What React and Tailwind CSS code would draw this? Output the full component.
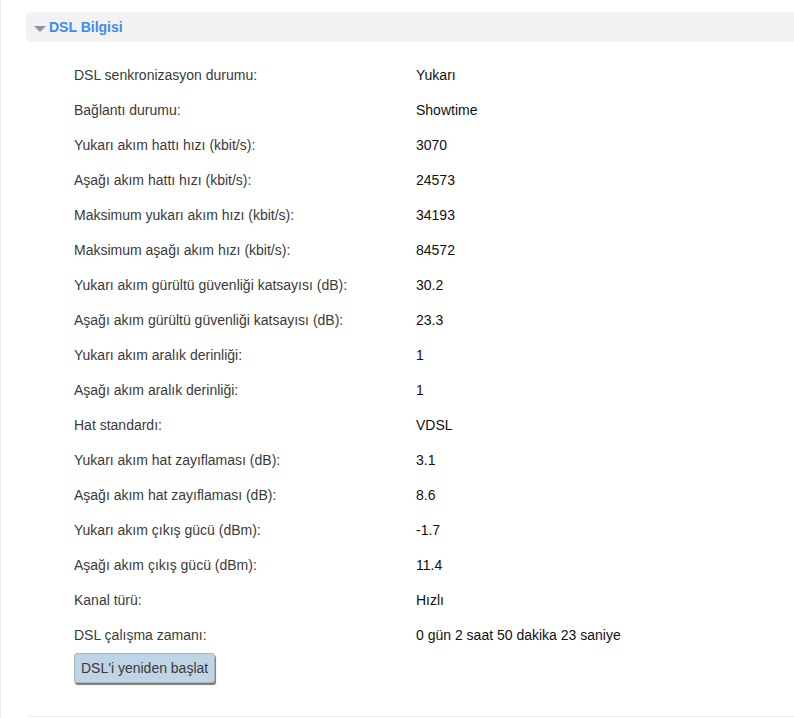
const rows = [
  ["DSL senkronizasyon durumu:", "Yukarı"],
  ["Bağlantı durumu:", "Showtime"],
  ["Yukarı akım hattı hızı (kbit/s):", "3070"],
  ["Aşağı akım hattı hızı (kbit/s):", "24573"],
  ["Maksimum yukarı akım hızı (kbit/s):", "34193"],
  ["Maksimum aşağı akım hızı (kbit/s):", "84572"],
  ["Yukarı akım gürültü güvenliği katsayısı (dB):", "30.2"],
  ["Aşağı akım gürültü güvenliği katsayısı (dB):", "23.3"],
  ["Yukarı akım aralık derinliği:", "1"],
  ["Aşağı akım aralık derinliği:", "1"],
  ["Hat standardı:", "VDSL"],
  ["Yukarı akım hat zayıflaması (dB):", "3.1"],
  ["Aşağı akım hat zayıflaması (dB):", "8.6"],
  ["Yukarı akım çıkış gücü (dBm):", "-1.7"],
  ["Aşağı akım çıkış gücü (dBm):", "11.4"],
  ["Kanal türü:", "Hızlı"],
  ["DSL çalışma zamanı:", "0 gün 2 saat 50 dakika 23 saniye"],
];

export default function App() {
  return (
    <div className="w-[794px] h-[718px] overflow-hidden bg-white border-l border-[#ededed] text-[14px]" style={{ fontFamily: '"Liberation Sans", Arial, sans-serif' }}>
      <div className="pl-[25px] pt-3">
        <div className="h-[30px] bg-[#f2f2f2] rounded-l-[5px] flex items-center pl-2">
          <svg width="12" height="6" viewBox="0 0 12 6" className="mt-[3px]">
            <polygon points="0,0 12,0 6,6" fill="#8e9aa3" />
          </svg>
          <span className="ml-[3px] font-bold text-[14px] text-[#3d8af5]">DSL Bilgisi</span>
        </div>
        <div className="pl-[48px] pt-[16px]">
          {rows.map(([label, value]) => (
            <div key={label} className="h-[35px] flex items-center">
              <div className="w-[342px] text-[#3a3a3a]">{label}</div>
              <div className="text-[#111]">{value}</div>
            </div>
          ))}
          <button className="h-[30px] px-[6px] bg-[#bfd4e5] text-[#3a3a3a] text-[14px] rounded-[3px] border border-[#a9b4bc] shadow-[1px_2px_1px_#7a7a7a]">
            DSL'i yeniden başlat
          </button>
        </div>
        <div className="mt-[33px] ml-[2px] border-t border-[#ececec]" />
      </div>
    </div>
  );
}
